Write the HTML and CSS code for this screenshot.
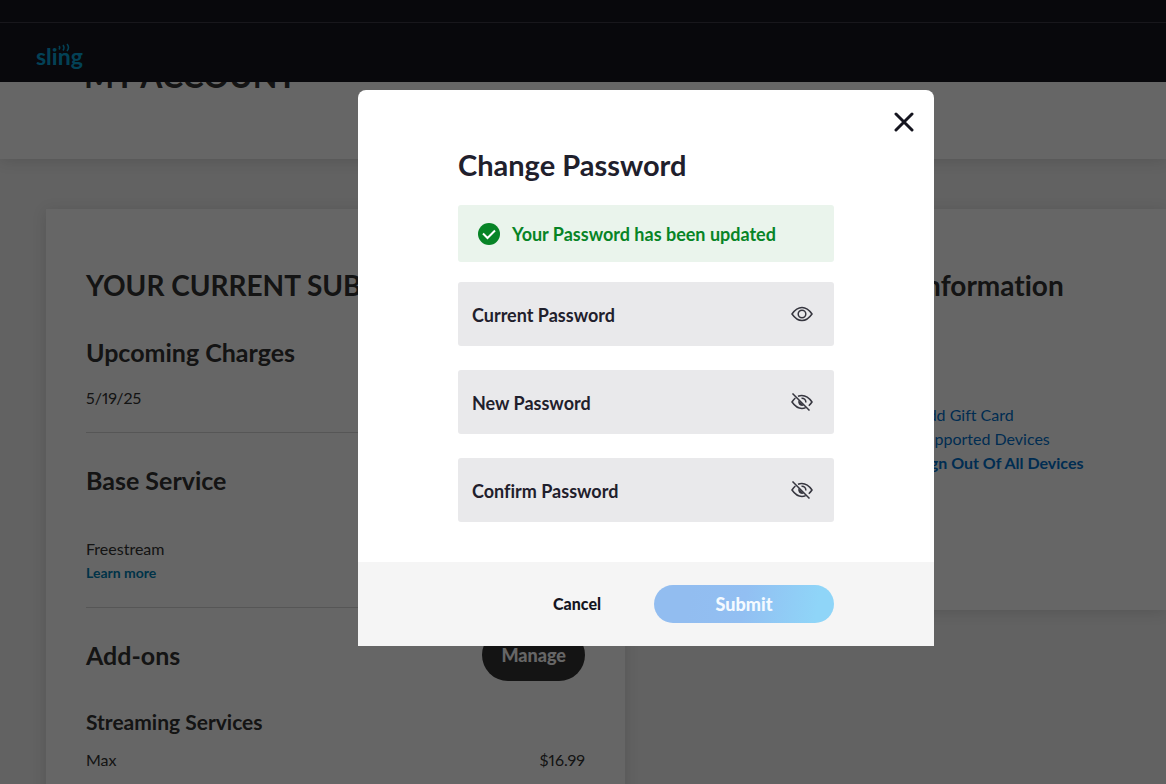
FILE: index.html
```html
<!DOCTYPE html>
<html lang="en">
<head>
  <meta charset="UTF-8">
  <meta name="viewport" content="width=device-width, initial-scale=1.0">
  <title>My Account | Sling</title>
  <link rel="stylesheet" href="styles.css">
</head>
<body>
  <header class="site-header">
    <div class="top-bar"></div>
    <div class="nav-bar">
      <a href="#" class="logo" aria-label="sling">
        <svg width="52" height="30" viewBox="0 0 52 30">
          <text x="1" y="24">sling</text>
          <path d="M24 5q1.500 1.500 0 3.500M28 4q2 2.500 0 5.500M32 3q3 3.500 0 7" />
        </svg>
      </a>
    </div>
  </header>

  <!-- Page Title -->
  <section class="page-title">
    <h1>MY ACCOUNT</h1>
  </section>

  <!-- Account Cards -->
  <main class="cards">
    <section class="card">
      <h2>YOUR CURRENT SUBSCRIPTION</h2>

      <div class="block">
        <h3>Upcoming Charges</h3>
        <p>5/19/25</p>
      </div>

      <div class="block base">
        <h3>Base Service</h3>
        <p>Freestream</p>
        <a href="#" class="learn-more">Learn more</a>
      </div>

      <div class="block-head">
        <h3>Add-ons</h3>
        <button type="button" class="manage">Manage</button>
      </div>
      <h4>Streaming Services</h4>
      <div class="price-row">
        <span>Max</span>
        <span>$16.99</span>
      </div>
    </section>

    <section class="card info-card">
      <h2>Information</h2>
      <ul class="links">
        <li><a href="#">Add Gift Card</a></li>
        <li><a href="#">Supported Devices</a></li>
        <li><a href="#"><b>Sign Out Of All Devices</b></a></li>
      </ul>
    </section>
  </main>

  <!-- Change Password Modal -->
  <div class="overlay">
    <form class="modal" role="dialog" aria-labelledby="modal-title">
      <button type="button" class="close" aria-label="Close">
        <svg width="20" height="20" viewBox="0 0 20 20"><path d="M2 2l16 16M18 2L2 18" /></svg>
      </button>

      <div class="modal-body">
        <h2 id="modal-title">Change Password</h2>
        <div class="alert" role="status">
          <svg width="22" height="22" viewBox="0 0 22 22">
            <circle cx="11" cy="11" r="11" />
            <path d="M5 10.500l4.500 4.500 7.500-7.500" />
          </svg>
          <span>Your Password has been updated</span>
        </div>

        <div class="field">
          <label for="current">Current Password</label>
          <input type="text" id="current">
          <button type="button" class="eye" aria-label="Hide password">
            <svg width="22" height="18" viewBox="0 0 22 18">
              <path d="M1 9C4.500 4 7.500 2.500 11 2.500S17.500 4 21 9C17.500 14 14.500 15.500 11 15.500S4.500 14 1 9z" />
              <circle cx="11" cy="9" r="3.800" />
            </svg>
          </button>
        </div>

        <div class="field">
          <label for="new">New Password</label>
          <input type="password" id="new">
          <button type="button" class="eye" aria-label="Show password">
            <svg width="22" height="18" viewBox="0 0 22 18">
              <path d="M7 3.200C12 1.500 16.500 2.500 21 9 20 10.500 19 11.600 17.800 12.700M4.400 5C3.200 6 2.100 7.300 1 9 4.800 14.500 9.500 16.500 14.500 14.800M10.500 5.200A3.900 3.900 0 0 1 14.800 9.500M1.500.5l17 17" />
              <path class="solid" d="M7.500 7.200l5.300 5.300C9.500 14 6.200 10.800 7.500 7.200z" />
            </svg>
          </button>
        </div>

        <div class="field">
          <label for="confirm">Confirm Password</label>
          <input type="password" id="confirm">
          <button type="button" class="eye" aria-label="Show password">
            <svg width="22" height="18" viewBox="0 0 22 18">
              <path d="M7 3.200C12 1.500 16.500 2.500 21 9 20 10.500 19 11.600 17.800 12.700M4.400 5C3.200 6 2.100 7.300 1 9 4.800 14.500 9.500 16.500 14.500 14.800M10.500 5.200A3.900 3.900 0 0 1 14.800 9.500M1.500.5l17 17" />
              <path class="solid" d="M7.500 7.200l5.300 5.300C9.500 14 6.200 10.800 7.500 7.200z" />
            </svg>
          </button>
        </div>
      </div>

      <div class="modal-footer">
        <button type="button" class="cancel">Cancel</button>
        <button type="submit" class="submit">Submit</button>
      </div>
    </form>
  </div>
</body>
</html>
```
FILE: styles.css
```css
:root {
  --ink: #1f202c;
  --text: #323232;
  --link: #0070cc;
  --navy: #16141f;
}

* {
  box-sizing: border-box;
}

html {
  overflow: hidden;
}

body {
  margin: 0;
  font-family: Lato, "Open Sans", sans-serif;
  font-size: 16px;
  line-height: 24px;
  font-variant-ligatures: none;
  font-variant-numeric: proportional-nums;
  color: var(--text);
  background-color: #f4f4f4;
}

h1, h2, h3, h4, p, ul {
  margin: 0;
}

h1 {
  font-size: 32px;
  line-height: 36px;
}

h2 {
  font-size: 28px;
  line-height: 36px;
}

h3 {
  font-size: 25px;
  line-height: 32px;
}

h4 {
  font-size: 21px;
  line-height: 28px;
}

a {
  color: var(--link);
  text-decoration: none;
}

button {
  font-family: inherit;
  border: none;
  cursor: pointer;
}

/* Header */
.site-header {
  position: fixed;
  top: 0;
  left: 0;
  right: 0;
  background-color: var(--navy);
}

.top-bar {
  height: 23px;
  border-bottom: 1px solid #3c3a46;
}

.nav-bar {
  padding: 18px 35px 11px;
}

.logo svg {
  display: block;
}

.logo text {
  font-size: 23px;
  font-weight: bold;
  fill: #08a4d8;
}

.logo path {
  fill: none;
  stroke: #08a4d8;
  stroke-width: 1.500;
}

.page-title {
  padding: 58px 84px 64px;
  background-color: #fff;
  border-bottom: 1px solid #fff;
  box-shadow: 0 2px 14px rgba(0, 0, 0, 0.12);
}

.page-title h1 {
  color: var(--text);
}

/* Cards */
.cards {
  display: grid;
  grid-template-columns: 579fr 521fr;
  gap: 20px;
  align-items: start;
  padding: 50px 0 0 46px;
}

.card {
  padding: 58px 40px 40px;
  background-color: #fff;
  box-shadow: 0 2px 14px rgba(0, 0, 0, 0.12);
  white-space: nowrap;
}

.card h2,
.card h3,
.card h4 {
  color: var(--text);
}

.block {
  padding: 33px 0 22px;
  border-bottom: 1px solid #d8d8d8;
}

.block p {
  margin-top: 18px;
}

.block.base {
  padding-top: 31px;
}

.block.base p {
  margin-top: 41px;
}

.learn-more {
  display: block;
  font-size: 14px;
  font-weight: bold;
  color: #0080b4;
}

.block-head {
  display: flex;
  justify-content: space-between;
  align-items: center;
  padding-top: 21px;
}

.manage {
  padding: 0 19px;
  border-radius: 26px;
  font-size: 18px;
  font-weight: 900;
  line-height: 52px;
  color: #fff;
  background-color: #323232;
}

.card h4 {
  margin: 27px 0 12px;
}

.price-row {
  display: flex;
  justify-content: space-between;
}

.info-card {
  padding-left: 272px;
}

.links {
  padding: 100px 0 95px;
  list-style: none;
}

/* Modal */
.overlay {
  position: fixed;
  top: 0;
  left: 0;
  right: 0;
  bottom: 0;
  display: flex;
  justify-content: center;
  align-items: flex-start;
  padding: 90px 0 0 126px;
  background-color: rgba(0, 0, 0, 0.6);
}

.modal {
  position: relative;
  width: 576px;
  border-radius: 8px 8px 0 0;
  background-color: #fff;
}

.close {
  position: absolute;
  top: 22px;
  right: 20px;
  padding: 0;
  background: none;
}

.close svg {
  display: block;
  fill: none;
  stroke: #15151f;
  stroke-width: 3;
  stroke-linecap: round;
}

.modal-body {
  display: flex;
  flex-direction: column;
  gap: 24px;
  padding: 57px 100px 40px;
}

.modal-body h2 {
  margin-bottom: -2px;
  font-size: 29px;
  color: var(--ink);
}

.alert {
  display: flex;
  align-items: center;
  gap: 12px;
  height: 57px;
  margin-bottom: -4px;
  padding: 0 20px;
  border-radius: 3px;
  font-size: 18px;
  font-weight: bold;
  color: #078426;
  background-color: #eaf4ec;
}

.alert circle {
  fill: #078426;
}

.alert path {
  fill: none;
  stroke: #fff;
  stroke-width: 2;
}

.field {
  display: flex;
  align-items: center;
  height: 64px;
  padding: 0 21px 0 14px;
  border-radius: 3px;
  background-color: #e9e9eb;
}

.field label {
  padding-top: 2px;
  font-size: 18px;
  font-weight: bold;
  color: var(--ink);
}

.field input {
  flex: 1;
  min-width: 0;
  border: none;
  outline: none;
  font-size: 18px;
  background: none;
}

.eye {
  padding: 0;
  background: none;
}

.eye svg {
  display: block;
  fill: none;
  stroke: #36363f;
  stroke-width: 1.500;
}

.eye .solid {
  fill: #36363f;
  stroke: none;
}

.modal-footer {
  display: flex;
  justify-content: flex-end;
  padding: 23px 100px;
  background-color: #f5f5f5;
}

.modal-footer button {
  padding: 0;
  line-height: 38px;
}

.cancel {
  width: 154px;
  font-size: 16px;
  font-weight: 900;
  color: #15151f;
  background: none;
}

.submit {
  width: 180px;
  border-radius: 19px;
  font-size: 18px;
  font-weight: 900;
  color: #f4faff;
  background: linear-gradient(100deg, #92bdf0 20%, #92bff2 50%, #8fd5f8 90%);
}
```
